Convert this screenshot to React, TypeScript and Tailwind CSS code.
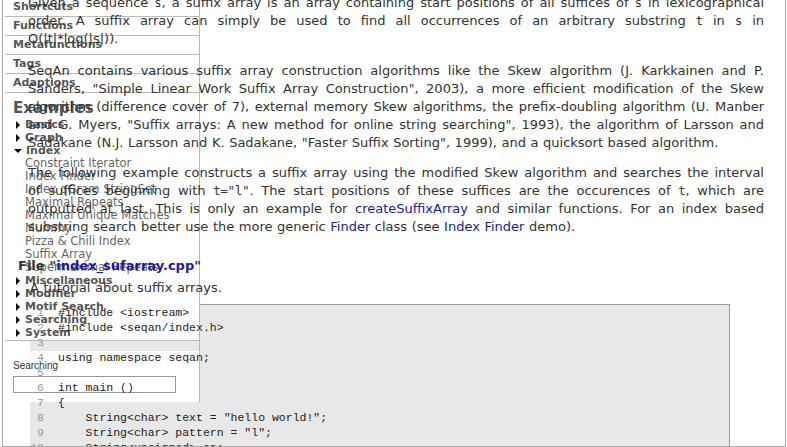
import type { ReactNode } from 'react';

const sans = "font-['DejaVu_Sans',Verdana,sans-serif]";
const mono = "font-['Liberation_Mono','Courier_New',monospace]";

const navTop = ['Shortcuts', 'Functions', 'Metafunctions', 'Tags', 'Adaptions'];

const indexDemos = [
  'Constraint Iterator',
  'Index Finder',
  'Index qGram StringSet',
  'Maximal Repeats',
  'Maximal Unique Matches',
  'Mummy',
  'Pizza & Chili Index',
  'Suffix Array',
  'Supermaximal Repeats',
];

const codeLines = [
  '#include <iostream>',
  '#include <seqan/index.h>',
  '',
  'using namespace seqan;',
  '',
  'int main ()',
  '{',
  '    String<char> text = "hello world!";',
  '    String<char> pattern = "l";',
  '    String<unsigned> sa;',
  '',
];

function C({ children }: { children: ReactNode }) {
  return <code className="font-['DejaVu_Sans_Mono',monospace] text-[12px] text-[#333]">{children}</code>;
}

function A({ children }: { children: ReactNode }) {
  return <a className="text-[#1a1a9c]">{children}</a>;
}

// one line of justified text, wrapped where the original page wraps it
function L({ children, last }: { children: ReactNode; last?: boolean }) {
  return <div className={last ? 'text-left' : 'text-justify [text-align-last:justify]'}>{children}</div>;
}

function Closed() {
  return <span className="mr-[5px] inline-block h-0 w-0 border-y-[4px] border-l-[4px] border-y-transparent border-l-black" />;
}

function Open() {
  return <span className="mr-[4px] ml-[-2px] inline-block h-0 w-0 border-x-[4px] border-t-[4px] border-x-transparent border-t-black" />;
}

function Group({ label, open }: { label: string; open?: boolean }) {
  return (
    <div className="flex h-[13px] items-center pl-[11px] text-[11px] leading-[13px] font-bold text-[#555]">
      {open ? <Open /> : <Closed />}
      <span>{label}</span>
    </div>
  );
}

export default function App() {
  return (
    <div className={`h-[447px] w-[787px] overflow-hidden bg-white ${sans}`}>
      <div className="relative ml-[2px] h-[447px] w-[784px] overflow-hidden border-x border-b border-[#aaa]">
        {/* main article */}
        <div className="-mt-[6px] pl-[25px] pr-[21px] text-[13px] leading-[18px] text-[#333] [word-spacing:0.45px]">
          <div className="relative z-10 mb-[14px]">
            <L>
              Given a sequence <C>s</C>, a suffix array is an array containing start positions of all suffices of{' '}
              <C>s</C> in lexicographical
            </L>
            <L>
              order. A suffix array can simply be used to find all occurrences of an arbitrary substring <C>t</C> in{' '}
              <C>s</C> in
            </L>
            <L last>O(|t|*log(|s|)).</L>
          </div>
          <div className="relative z-10 mb-[12px]">
            <L>SeqAn contains various suffix array construction algorithms like the Skew algorithm (J. Karkkainen and P.</L>
            <L>Sanders, "Simple Linear Work Suffix Array Construction", 2003), a more efficient modification of the Skew</L>
            <L>algorithm (difference cover of 7), external memory Skew algorithms, the prefix-doubling algorithm (U. Manber</L>
            <L>and G. Myers, "Suffix arrays: A new method for online string searching", 1993), the algorithm of Larsson and</L>
            <L last>
              Sadakane (N.J. Larsson and K. Sadakane, "Faster Suffix Sorting", 1999), and a quicksort based algorithm.
            </L>
          </div>
          <div className="relative z-10">
            <L>
              The following example constructs a suffix array using the modified Skew algorithm and searches the
              interval
            </L>
            <L>
              of suffices beginning with <C>t="l"</C>. The start positions of these suffices are the occurences of{' '}
              <C>t</C>, which are
            </L>
            <L>
              outputted at last. This is only an example for <A>createSuffixArray</A> and similar functions. For an
              index based
            </L>
            <L last>
              substring search better use the more generic <A>Finder</A> class (see <A>Index Finder</A> demo).
            </L>
          </div>

          <h3 className="relative z-10 mt-[22px] -ml-[10px] text-[13px] leading-[16px] font-bold text-[#333]">
            File "<A>index_sufarray.cpp</A>"
          </h3>
          <p className="relative z-10 mt-[6px] ml-[2px] leading-[16px]">A tutorial about suffix arrays.</p>

          <div className="mt-[8px] ml-[2px] w-[700px] border-t border-r border-[#999] bg-[#e8e8e8]">
            <div className={`relative z-10 text-[11.5px] leading-[15px] text-[#222] [word-spacing:0] ${mono}`}>
              {codeLines.map((line, i) => (
                <div key={i} className="flex h-[15px]">
                  <span className="w-[14px] shrink-0 text-right text-[#999]">{i + 1}</span>
                  <span className="ml-[14px] whitespace-pre">{line}</span>
                </div>
              ))}
            </div>
          </div>
        </div>

        {/* navigation side bar, lying over the article */}
        <aside className="absolute top-[-2px] left-[2px] w-[195px] border-r border-[#bbb]">
          <div className="border-b border-[#bbb] bg-white pb-px">
            {navTop.map(item => (
              <div
                key={item}
                className="h-[19px] border-b border-[#bbb] pl-[8px] text-[11px] leading-[18px] font-bold text-[#555]"
              >
                {item}
              </div>
            ))}
            <div className="h-[25px] pt-[5px] pl-[8px] text-[15px] leading-[20px] font-bold text-[#555]">
              Examples
            </div>
            <Group label="Basics" />
            <Group label="Graph" />
            <Group label="Index" open />
            {indexDemos.map(d => (
              <div key={d} className="h-[13px] pl-[20px] text-[11.5px] leading-[13px] text-[#666]">
                {d}
              </div>
            ))}
            <Group label="Miscellaneous" />
            <Group label="Modifier" />
            <Group label="Motif Search" />
            <Group label="Searching" />
            <Group label="System" />
          </div>

          <div className="mt-[10px] h-[51px] bg-white pt-[9px] pl-[8px]">
            <div className="font-['Liberation_Sans',Arial,sans-serif] text-[10px] leading-[12px] text-[#333]">
              Searching
            </div>
            <div className="mt-[4px] h-[17px] w-[163px] border border-[#999]" />
          </div>
        </aside>
      </div>
    </div>
  );
}
